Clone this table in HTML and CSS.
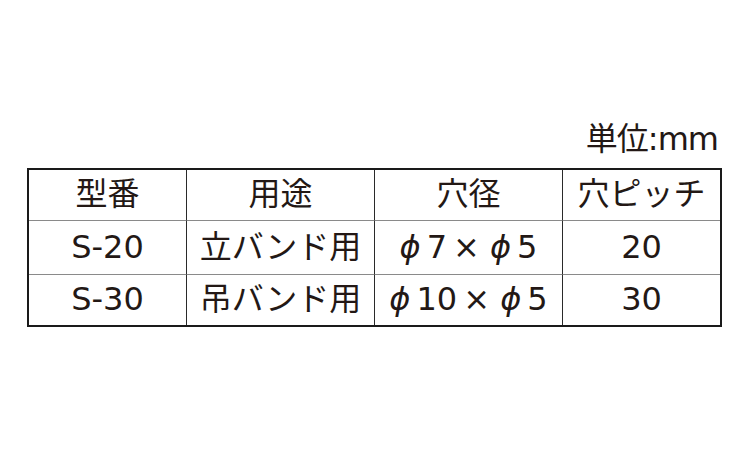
FILE: index.html
```html
<!DOCTYPE html>
<html lang="ja">
<head>
<meta charset="utf-8">
<title>仕様表</title>
<link rel="stylesheet" href="styles.css">
</head>
<body>
<div class="page">
  <div class="unit">単位:mm</div>
  <div class="tbl">
    <div class="c hd">型番</div>
    <div class="c hd">用途</div>
    <div class="c hd">穴径</div>
    <div class="c hd last">穴ピッチ</div>
    <div class="c r2">S-20</div>
    <div class="c r2">立バンド用</div>
    <div class="c r2"><span class="t"><span class="phi">ϕ</span>7<span class="x">×</span> <span class="phi">ϕ</span>5</span></div>
    <div class="c r2 last">20</div>
    <div class="c r3">S-30</div>
    <div class="c r3">吊バンド用</div>
    <div class="c r3"><span class="t"><span class="phi">ϕ</span>10<span class="x">×</span> <span class="phi">ϕ</span>5</span></div>
    <div class="c r3 last">30</div>
  </div>
</div>
</body>
</html>
```

FILE: styles.css
```css
html, body {
  margin: 0;
  padding: 0;
  background: #ffffff;
}
.page {
  width: 750px;
  height: 450px;
  padding-top: 119px;
  box-sizing: border-box;
  font-family: "DejaVu Sans", "Noto Sans CJK JP", sans-serif;
  color: #231815;
  font-size: 32px;
}
.unit {
  height: 40px;
  line-height: 40px;
  margin-bottom: 9px;
  padding-right: 32px;
  text-align: right;
  letter-spacing: -1px;
}
.tbl {
  margin-left: 27px;
  width: 695px;
  height: 159px;
  box-sizing: border-box;
  border: 2px solid #1a1a1a;
  display: grid;
  grid-template-columns: 158px 188px 188px 157px;
  grid-template-rows: 51px 54px 50px;
}
.c {
  display: flex;
  align-items: center;
  justify-content: center;
  border-right: 1px solid #2a2a2a;
  white-space: nowrap;
  line-height: 1;
}
.c.last {
  border-right: none;
}
.hd, .r2 {
  border-bottom: 1px solid #8a8a8a;
}
.hd {
  padding-bottom: 3px;
  box-sizing: border-box;
}
.r2, .r3 {
  padding-bottom: 2px;
  box-sizing: border-box;
}
.t {
  white-space: pre;
}
.phi {
  font-style: italic;
  margin-right: 6px;
}
.x {
  margin-left: 6px;
}
```
